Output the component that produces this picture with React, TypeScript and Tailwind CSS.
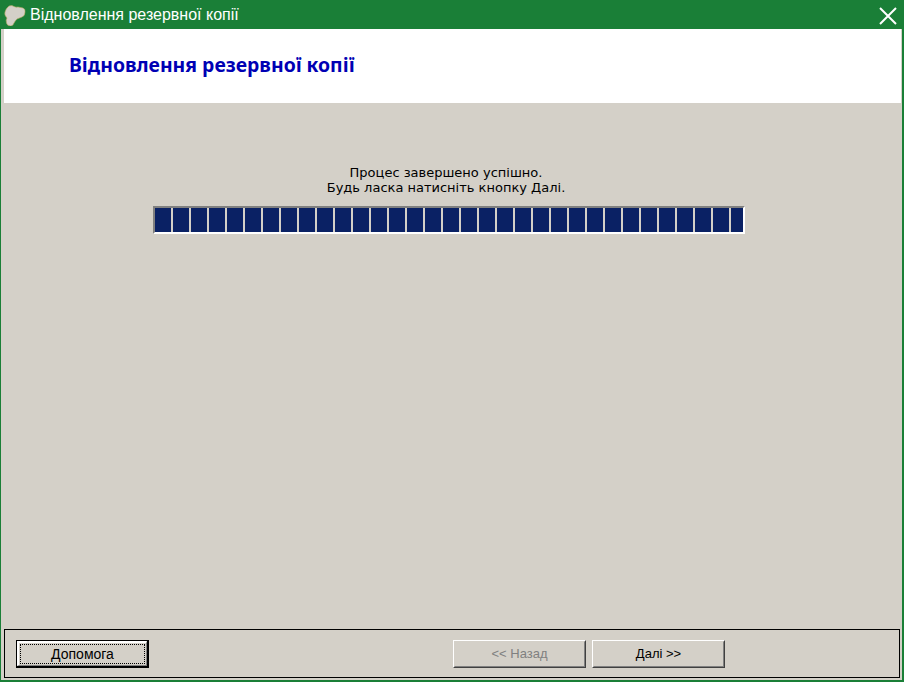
const CELLS = Array.from({ length: 33 });

function WinButton({ label, disabled, focused }: { label: string; disabled?: boolean; focused?: boolean }) {
    if (focused) {
        return (
            <div className="w-[133px] h-[28px] border-t border-l border-r-2 border-b-2 border-black bg-[#d4d0c8]">
                <div className="h-full border-t-2 border-l-2 border-t-white border-l-white border-r border-b border-r-[#808080] border-b-[#808080] p-[1px]">
                    <div className="h-full border border-dotted border-black flex items-center justify-center text-[14px] text-black">
                        {label}
                    </div>
                </div>
            </div>
        );
    }

    return (
        <div className="w-[133px] h-[28px] bg-[#d4d0c8] border-t border-l border-t-white border-l-white border-r border-b border-r-[#404040] border-b-[#404040]">
            <div className={`h-full flex items-center justify-center text-[13px] border-t border-l border-t-[#d4d0c8] border-l-[#d4d0c8] border-r border-b border-r-[#808080] border-b-[#808080] ${disabled ? "text-[#808080]" : "text-black"}`}>
                {label}
            </div>
        </div>
    );
}

export default function App() {
    return (
        <div className="w-[904px] h-[682px] flex flex-col bg-[#1a7f37] font-['Liberation_Sans',sans-serif] overflow-hidden">
            {/* ===== TITLE BAR ===== */}
            <div className="h-[29px] shrink-0 flex items-center pl-[4px] pr-[7px] text-white">
                <svg width="22" height="22" viewBox="0 0 22 22" className="shrink-0">
                    <path d="M5 2 Q8 1 10 2.5 Q12 3.5 14 3 L19 4 Q21.5 5 21 8 Q21 12 18 13 L13 15 Q11 17 10 19 Q9 22 7 22 Q3 22 2.5 19 Q1.5 16 3 14 Q0 11 1 8 Q2 5 3 4 Z" fill="#d4d0c8" stroke="#b8a860" strokeWidth="0.6" />
                </svg>
                <span className="ml-[4px] text-[16px] leading-none whitespace-nowrap">Відновлення резервної копії</span>
                <svg width="18" height="18" viewBox="0 0 18 18" className="ml-auto mt-[3px]">
                    <path d="M1 1 L17 17 M17 1 L1 17" stroke="#ffffff" strokeWidth="2" fill="none" />
                </svg>
            </div>

            {/* ===== BODY ===== */}
            <div className="flex-1 min-h-0 flex flex-col ml-[1px] mr-[2px] mb-[2px] bg-[#d4d0c8] pl-[3px] pr-[1px]">
                <div className="h-[74px] shrink-0 bg-white pl-[65px] pb-[2px] flex items-center">
                    <h1 className="text-[19.4px] font-bold font-['Noto_Sans',sans-serif] text-[#0000b4] leading-none">
                        Відновлення резервної копії
                    </h1>
                </div>

                <div className="flex-1 min-h-0 flex flex-col items-center pt-[62px]">
                    <div className="mr-[13px] font-['DejaVu_Sans',sans-serif] text-[13px] leading-[15px] text-black text-center">
                        <p>Процес завершено успішно.</p>
                        <p>Будь ласка натисніть кнопку Далі.</p>
                    </div>

                    <div className="mt-[11px] mr-[8px] w-[592px] h-[28px] border-2 border-t-[#808080] border-l-[#808080] border-r-white border-b-white flex gap-[2px] overflow-hidden">
                        {CELLS.map((_, i) => (
                            <div key={i} className="w-[16px] h-full shrink-0 bg-[#0a2164]" />
                        ))}
                    </div>
                </div>

                {/* ===== BUTTONS ===== */}
                <div className="h-[49px] shrink-0 mb-[2px] mr-[1px] border border-black flex items-start pt-[10px] pl-[11px]">
                    <WinButton label="Допомога" focused />
                    <div className="ml-[304px]">
                        <WinButton label="<< Назад" disabled />
                    </div>
                    <div className="ml-[6px]">
                        <WinButton label="Далі >>" />
                    </div>
                </div>
            </div>
        </div>
    );
}
